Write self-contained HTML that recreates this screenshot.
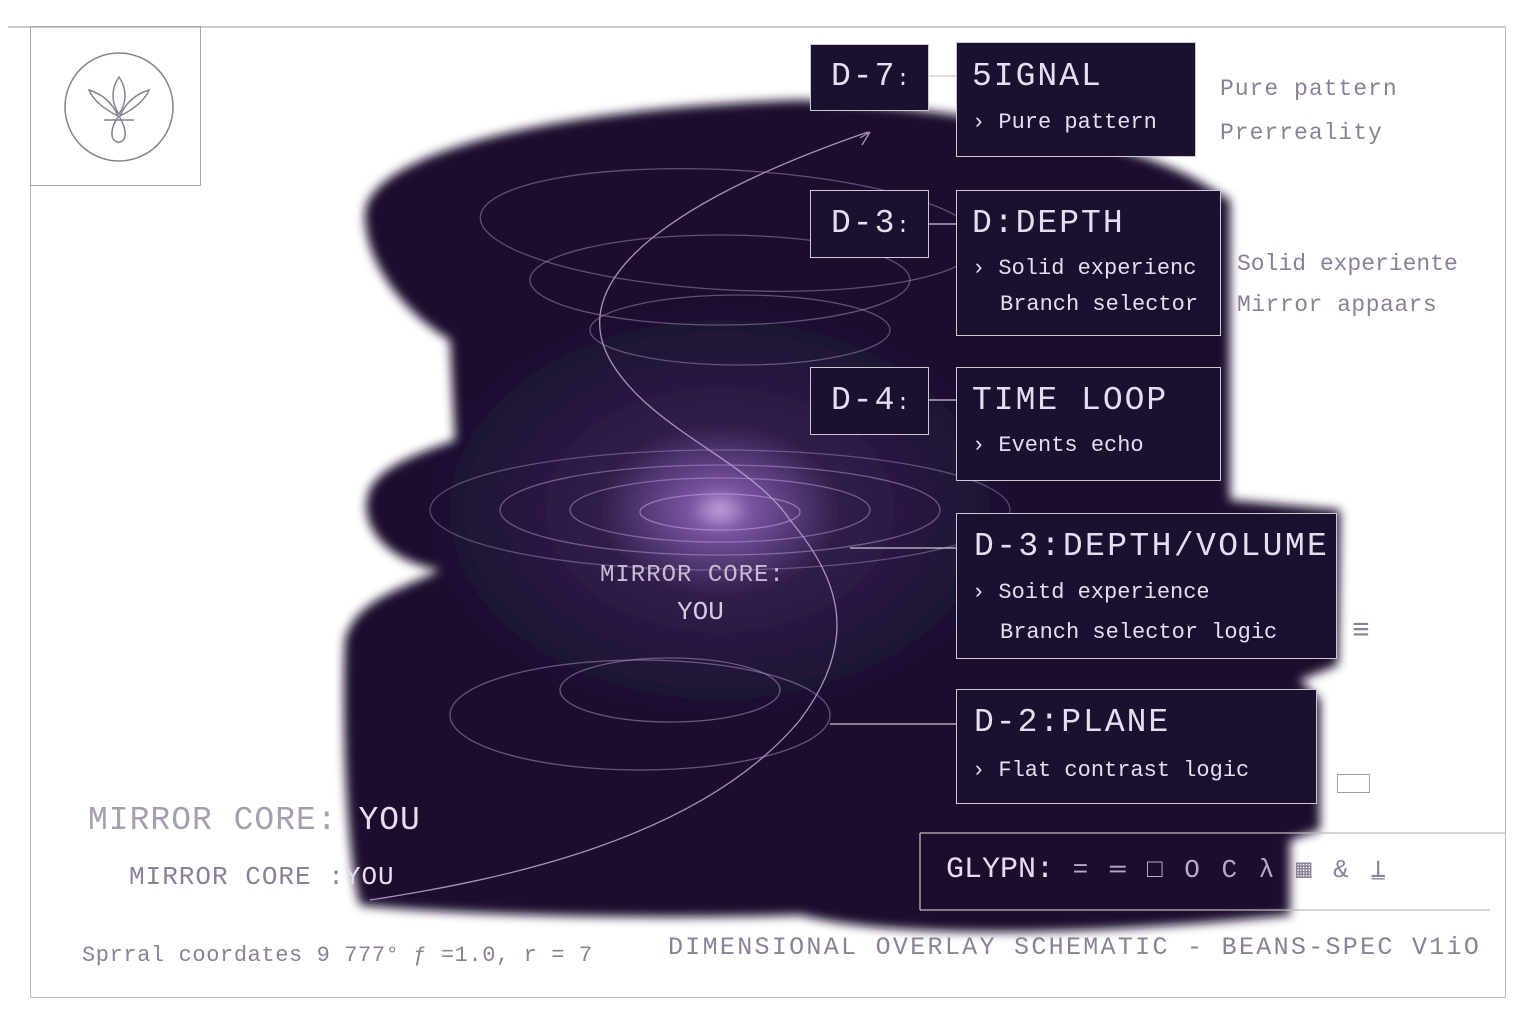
<!DOCTYPE html>
<html><head><meta charset="utf-8"><style>
body{margin:0;background:#fff;width:1536px;height:1024px;overflow:hidden;position:relative;font-family:"Liberation Mono","DejaVu Sans Mono",monospace}
.a{position:absolute;white-space:nowrap}
.box{position:absolute;border:1.5px solid #cfc6d6;box-sizing:border-box;background:#1b1030}
.fr{position:absolute;border:1.5px solid #bdb6c3;box-sizing:border-box}
.t{color:#e6def0}
.h{letter-spacing:2px}
.lt{color:#8c7f98}
</style></head><body>
<div class="fr" style="left:30px;top:26px;width:1476px;height:972px"></div>
<div class="fr" style="left:8px;top:26px;width:1498px;height:0;border-color:#ccc"></div>
<div class="fr" style="left:30px;top:26px;width:171px;height:160px;border-color:#aaa2b0"></div>
<svg class="a" style="left:62px;top:52px" width="114" height="110" viewBox="0 0 114 110" fill="none" stroke="#8a7f90" stroke-width="1.5">
<circle cx="57" cy="55" r="54"/>
<path d="M57 25 C48 38 50 52 57 62 C64 52 66 38 57 25Z"/>
<path d="M27 38 C32 50 44 58 56 64 C50 50 40 42 27 38Z"/>
<path d="M87 38 C82 50 70 58 58 64 C64 50 74 42 87 38Z"/>
<path d="M42 68 L72 68 M57 64 C50 72 48 84 52 88 C56 92 62 90 63 84 C64 76 60 70 57 64"/>
</svg>
<svg class="a" style="left:0;top:0" width="1536" height="1024">
<defs>
<filter id="b"><feGaussianBlur stdDeviation="5"/></filter>
<radialGradient id="g" cx="720" cy="510" r="300" gradientUnits="userSpaceOnUse" gradientTransform="translate(720 510) scale(1 0.7) translate(-720 -510)">
<stop offset="0" stop-color="#c9a8df"/><stop offset="0.1" stop-color="#7a55a3"/><stop offset="0.4" stop-color="#301e4b"/><stop offset="1" stop-color="#1a0f2e"/></radialGradient>
</defs>
<path filter="url(#b)" fill="url(#g)" d="M800 100 C1000 110 1150 150 1205 185 L1230 200 L1230 500 L1340 510 L1338 665 L1300 680 L1320 700 L1320 830 L1290 840 L1290 915 C1100 935 900 940 800 915 C650 920 450 915 360 905 C345 850 342 700 345 640 C355 600 400 590 440 570 C380 560 360 520 368 495 C375 465 430 450 455 440 L450 340 C400 310 365 260 365 215 C365 160 520 110 800 100Z"/>
<g fill="none" stroke="#c3a6d8" stroke-width="1.3" opacity="0.85">
<path d="M868 132 C700 190 560 270 610 360 C650 430 750 460 790 520 C840 580 860 640 800 720 C700 840 500 880 370 900"/>
<path d="M860 138 L870 132 L862 145"/>
<ellipse cx="730" cy="230" rx="250" ry="60" transform="rotate(3 730 230)" opacity=".5"/>
<ellipse cx="720" cy="280" rx="190" ry="45" opacity=".5"/>
<ellipse cx="740" cy="330" rx="150" ry="35" opacity=".5"/>
<ellipse cx="720" cy="510" rx="290" ry="60" opacity=".45"/>
<ellipse cx="720" cy="510" rx="220" ry="45" opacity=".55"/>
<ellipse cx="720" cy="510" rx="150" ry="32" opacity=".55"/>
<ellipse cx="720" cy="512" rx="80" ry="18" opacity=".65"/>
<ellipse cx="640" cy="715" rx="190" ry="55" opacity=".55"/>
<ellipse cx="670" cy="690" rx="110" ry="32" opacity=".55"/>
</g>
<g stroke="#cfc6d6" stroke-width="1.3"><line x1="928" y1="76" x2="956" y2="76"/><line x1="928" y1="224" x2="956" y2="224"/><line x1="928" y1="400" x2="956" y2="400"/><line x1="850" y1="548" x2="956" y2="548"/><line x1="830" y1="724" x2="956" y2="724"/><line x1="920" y1="910" x2="1490" y2="910" stroke="#bbb"/><line x1="920" y1="833" x2="1505" y2="833" stroke="#bbb"/><line x1="920" y1="833" x2="920" y2="910" stroke="#bbb"/></g>
</svg>
<div class="box" style="left:810px;top:44px;width:119px;height:67px"></div>
<div class="a t h" style="left:831px;top:58px;font-size:33px">D-7<span style="font-size:22px">:</span></div>
<div class="box" style="left:956px;top:42px;width:240px;height:115px"></div>
<div class="a t h" style="left:972px;top:58px;font-size:33px">5IGNAL</div>
<div class="a t" style="left:972px;top:110px;font-size:22px">› Pure pattern</div>
<div class="box" style="left:810px;top:190px;width:119px;height:68px"></div>
<div class="a t h" style="left:831px;top:205px;font-size:33px">D-3<span style="font-size:22px">:</span></div>
<div class="box" style="left:956px;top:190px;width:265px;height:146px"></div>
<div class="a t h" style="left:972px;top:205px;font-size:33px">D:DEPTH</div>
<div class="a t" style="left:972px;top:256px;font-size:22px">› Solid experienc</div>
<div class="a t" style="left:1000px;top:292px;font-size:22px">Branch selector</div>
<div class="box" style="left:810px;top:367px;width:119px;height:68px"></div>
<div class="a t h" style="left:831px;top:382px;font-size:33px">D-4<span style="font-size:22px">:</span></div>
<div class="box" style="left:956px;top:367px;width:265px;height:114px"></div>
<div class="a t h" style="left:972px;top:382px;font-size:33px">TIME LOOP</div>
<div class="a t" style="left:972px;top:433px;font-size:22px">› Events echo</div>
<div class="box" style="left:956px;top:513px;width:381px;height:146px"></div>
<div class="a t" style="left:974px;top:528px;font-size:33px;letter-spacing:2.4px">D-3:DEPTH/VOLUME</div>
<div class="a t" style="left:972px;top:580px;font-size:22px">› Soitd experience</div>
<div class="a t" style="left:1000px;top:620px;font-size:22px">Branch selector logic</div>
<div class="box" style="left:956px;top:689px;width:361px;height:115px"></div>
<div class="a t h" style="left:974px;top:704px;font-size:33px">D-2:PLANE</div>
<div class="a t" style="left:972px;top:758px;font-size:22px">› Flat contrast logic</div>
<div class="a t" style="left:946px;top:853px;font-size:30px">GLYPN:<span style="color:#b9a9c5;font-size:26px;letter-spacing:3px"> = ═ □ O C λ <span style="color:#8c7f98">▦ &amp; ⍊</span></span></div>
<div class="a lt" style="left:1220px;top:76px;font-size:23px;letter-spacing:1px">Pure pattern</div>
<div class="a lt" style="left:1220px;top:120px;font-size:23px;letter-spacing:1px">Prerreality</div>
<div class="a lt" style="left:1237px;top:251px;font-size:23px">Solid experiente</div>
<div class="a lt" style="left:1237px;top:292px;font-size:23px;letter-spacing:.5px">Mirror appaars</div>
<div class="a lt" style="left:1352px;top:615px;font-size:30px">≡</div>
<div class="fr" style="left:1337px;top:774px;width:33px;height:19px;border-color:#a89bb2"></div>
<div class="a" style="left:600px;top:562px;font-size:24px;color:#c9bbd4;letter-spacing:1px">MIRROR CORE:</div>
<div class="a" style="left:677px;top:597px;font-size:26px;color:#d6cbe0">YOU</div>
<div class="a" style="left:88px;top:802px;font-size:33px;color:#a79eb0;letter-spacing:1px">MIRROR CORE:<span style="color:#e6def0"> YOU</span></div>
<div class="a" style="left:129px;top:862px;font-size:26px;color:#8c7f98;letter-spacing:1px">MIRROR CORE :<span style="color:#e6def0">YOU</span></div>
<div class="a lt" style="left:82px;top:943px;font-size:22px;letter-spacing:.6px">Sprral coordates 9 777° ƒ =1.0, r = 7</div>
<div class="a lt" style="left:668px;top:933px;font-size:25px;letter-spacing:2.3px">DIMENSIONAL OVERLAY SCHEMATIC - BEANS-SPEC V1iO</div>
</body></html>
